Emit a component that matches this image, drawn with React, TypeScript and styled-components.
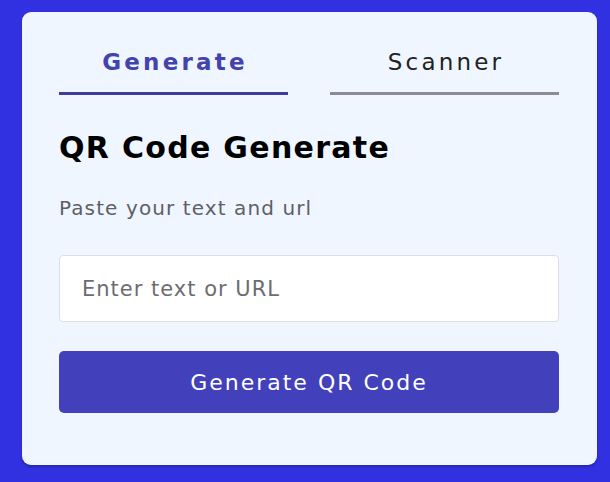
import React from "react";
import styled, { createGlobalStyle } from "styled-components";

const FONT = `"DejaVu Sans", "Noto Sans", sans-serif`;

const Global = createGlobalStyle`
  html, body { margin: 0; padding: 0; background: #3131e2; }
  body { font-family: ${FONT}; }
  * { box-sizing: border-box; }
`;

const Page = styled.div`
  width: 610px;
  height: 482px;
  padding: 12px 13px 0 22px;
  background: #3131e2;
`;

const Card = styled.div`
  width: 575px;
  height: 453px;
  background: #eff6ff;
  border-radius: 9px;
  padding: 30px 38px 0 37px;
  box-shadow: 0 2px 3px rgba(0, 0, 40, 0.25);
  display: flex;
  flex-direction: column;
`;

const Tabs = styled.div`
  display: grid;
  grid-template-columns: 229px 229px;
  column-gap: 42px;
`;

const Tab = styled.button<{ $active?: boolean }>`
  border: 0;
  background: transparent;
  padding: 0 0 10px;
  height: 53px;
  line-height: 40px;
  font-family: ${FONT};
  font-size: 23px;
  letter-spacing: 3.2px;
  text-indent: 3px;
  font-weight: ${(p) => (p.$active ? 700 : 400)};
  color: ${(p) => (p.$active ? "#4343ad" : "#222")};
  border-bottom: 3px solid ${(p) => (p.$active ? "#3d3d9c" : "#8b8b9c")};
  cursor: pointer;
`;

const Title = styled.h1`
  margin: 33px 0 0;
  font-size: 30px;
  line-height: 40px;
  letter-spacing: 1.3px;
  font-weight: 700;
  color: #000;
`;

const Subtitle = styled.p`
  margin: 27px 0 0;
  font-size: 20px;
  line-height: 26px;
  letter-spacing: 1.1px;
  color: #5f5f66;
`;

const Input = styled.input`
  margin-top: 34px;
  width: 100%;
  height: 67px;
  border: 1px solid #dcdfe6;
  border-radius: 4px;
  background: #fff;
  padding: 0 22px;
  font-family: ${FONT};
  font-size: 21px;
  letter-spacing: 1px;
  color: #222;
  outline: none;
  &::placeholder { color: #6c6c72; }
`;

const Button = styled.button`
  margin-top: 29px;
  width: 100%;
  height: 62px;
  border: 0;
  border-radius: 5px;
  background: #4240bb;
  color: #fff;
  font-family: ${FONT};
  font-size: 22px;
  letter-spacing: 2px;
  cursor: pointer;
`;

export default function App() {
  return (
    <>
      <Global />
      <Page>
        <Card>
          <Tabs>
            <Tab $active>Generate</Tab>
            <Tab>Scanner</Tab>
          </Tabs>
          <Title>QR Code Generate</Title>
          <Subtitle>Paste your text and url</Subtitle>
          <Input placeholder="Enter text or URL" />
          <Button>Generate QR Code</Button>
        </Card>
      </Page>
    </>
  );
}
